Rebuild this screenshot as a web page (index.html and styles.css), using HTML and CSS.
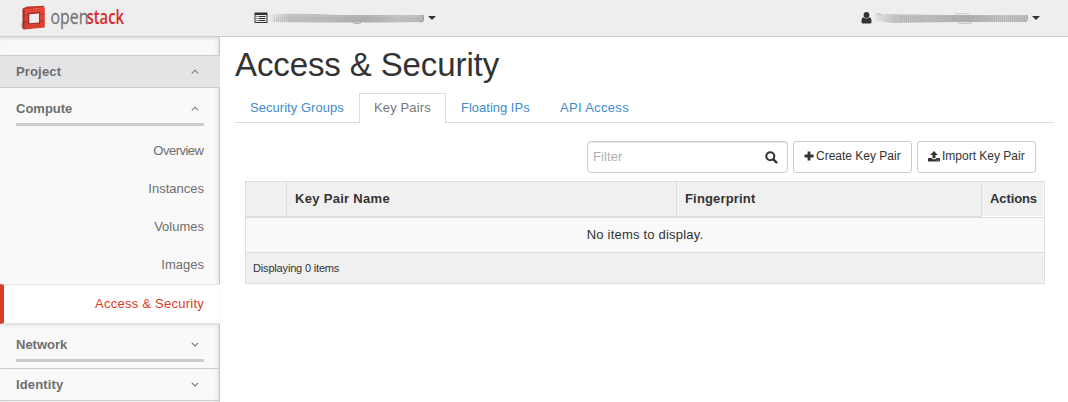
FILE: index.html
```html
<!DOCTYPE html>
<html lang="en">
<head>
<meta charset="utf-8">
<title>Access &amp; Security - OpenStack Dashboard</title>
<link rel="stylesheet" href="styles.css">
</head>
<body>
<header class="topbar">
  <svg class="logo" width="112" height="32" viewBox="0 0 112 32">
    <defs>
      <linearGradient id="face" x1="0" y1="0" x2="0" y2="1"><stop offset="0" stop-color="#e6473c"/><stop offset="1" stop-color="#d8402f"/></linearGradient>
      <linearGradient id="shade" x1="0" y1="0" x2="1" y2="0"><stop offset="0" stop-color="#aaa" stop-opacity="0"/><stop offset="1" stop-color="#777" stop-opacity=".8"/></linearGradient>
    </defs>
    <path d="M0 22.500l5-2v8z" fill="url(#shade)"/>
    <path d="M3.500 6.500L8 4.500l16.500-.8 1.300 1.800L5.500 8z" fill="#c5392f"/>
    <path d="M3.500 6.500l2.500 1v20l-2.500-1.500z" fill="#a62a24"/>
    <path fill="url(#face)" d="M5.500 7.500L25.800 5.500V25.500L5.500 27.500z"/>
    <path d="M8.800 10.800l12.200-.8v11.500l-12.200.8z" fill="#a32f29"/>
    <path d="M10.300 12.300l9.700-.8v9l-9.700.8z" fill="#eee"/>
    <path d="M4 13.300h5M4 20.300h5M21 12.300h4.800M21 19h4.800" stroke="#a5342d" stroke-width=".8"/>
    <g transform="translate(31.5 21.5) scale(.775 1)"><text class="logo-open">open</text></g>
    <g transform="translate(67.5 21.5) scale(.725 1)"><text class="logo-stack">stack</text></g>
  </svg>
  <div class="menu project-menu">
    <svg width="14" height="12" viewBox="0 0 14 12"><path fill="#333" fill-rule="evenodd" d="M1 .5h12l.5.500V10.500l-.5.500H1l-.5-.5V1zM1.500 3V10h11V3z"/><path d="M2.500 4.500h1M4.500 4.500H11.500M2.500 6.500h1M4.500 6.500H11.500M2.500 8.500h1M4.500 8.500H11.500" stroke="#333"/></svg>
    <svg class="smear" width="156" height="14" viewBox="0 0 156 14">
      <defs>
        <linearGradient id="blurA"><stop offset="0" stop-color="#ccc" stop-opacity=".3"/><stop offset=".12" stop-color="#c4c4c4"/><stop offset=".4" stop-color="#bdbdbd"/><stop offset=".6" stop-color="#b0b0b0"/><stop offset=".85" stop-color="#c6c6c6"/><stop offset="1" stop-color="#bbb"/></linearGradient>
        <pattern id="lines" width="2" height="14" patternUnits="userSpaceOnUse"><path d="M.5 0v14" stroke="#999" stroke-opacity=".3"/></pattern>
        <filter id="soft" x="-5%" y="-20%" width="110%" height="140%"><feGaussianBlur stdDeviation=".7"/></filter>
      </defs>
      <path filter="url(#soft)" fill="url(#blurA)" d="M1 3Q35 2 70 4L154 4l-1 7Q90 12 2 11z"/>
      <path fill="url(#lines)" d="M3 6h150v5H4z"/>
      <path d="M83 11.800q4 1.400 8 0" fill="none" stroke="#777" stroke-opacity=".6"/>
      <path d="M153.500 4v6l-4 1" fill="none" stroke="#888" stroke-opacity=".6"/>
    </svg>
    <span class="caret"></span>
  </div>
  <div class="menu user-menu">
    <svg width="11" height="12" viewBox="0 0 11 12"><circle cx="5.500" cy="3" r="2.900" fill="#333"/><path fill="#333" d="M2.500 5.300q3 2.400 6 0 2.200.5 2 4.700 0 1.500-1.500 1.500H2Q.5 11.500.5 10 .3 5.800 2.500 5.300z"/></svg>
    <svg class="smear" width="156" height="14" viewBox="0 0 156 14">
      <path filter="url(#soft)" fill="url(#blurA)" d="M1 3q3-2 6 0L75 4 154 4l-1 7-74 0-59 1Q8 11 1 9z"/>
      <path fill="url(#lines)" d="M25 5h127v6H25z"/>
      <path d="M2 3q3-1 6 1M81 3q7-.8 14 0" fill="none" stroke="#777" stroke-opacity=".3"/>
      <path d="M84 12q7 1 14 0M153.500 4v6" fill="none" stroke="#777" stroke-opacity=".4"/>
    </svg>
    <span class="caret"></span>
  </div>
</header>
<div class="page">
  <nav class="sidebar">
    <div class="panel-head current">Project<svg class="chev" width="8" height="5" viewBox="0 0 8 5"><path d="M.8 4.300L4 1.200l3.200 3.100"/></svg></div>
    <div class="group compute"><div class="group-title"><span class="t-compute">Compute</span><svg class="chev" width="8" height="5" viewBox="0 0 8 5"><path d="M.8 4.300L4 1.200l3.200 3.100"/></svg></div></div>
    <ul class="links">
      <li class="t-overview">Overview</li>
      <li>Instances</li>
      <li>Volumes</li>
      <li>Images</li>
      <li class="active">Access &amp; Security</li>
    </ul>
    <div class="group network"><div class="group-title">Network<svg class="chev" width="8" height="5" viewBox="0 0 8 5"><path d="M.8.800L4 3.900 7.200.800"/></svg></div></div>
    <div class="panel-head identity"><span>Identity</span><svg class="chev" width="8" height="5" viewBox="0 0 8 5"><path d="M.8.800L4 3.900 7.200.800"/></svg></div>
  </nav>
  <main class="content">
    <h1>Access &amp; Security</h1>
    <ul class="tabs">
      <li class="tab-groups"><span>Security Groups</span></li>
      <li class="tab-keys selected"><span>Key Pairs</span></li>
      <li class="tab-ips"><span>Floating IPs</span></li>
      <li class="tab-api"><span>API Access</span></li>
    </ul>
    <div class="actions">
      <div class="filter"><span>Filter</span>
        <svg width="13" height="13" viewBox="0 0 13 13"><circle cx="5.300" cy="5.300" r="4" fill="none" stroke="#333" stroke-width="2"/><path d="M8.400 8.400l3 3" stroke="#333" stroke-width="2.300" stroke-linecap="round"/></svg>
      </div>
      <div class="btn create"><svg width="10" height="10" viewBox="0 0 10 10"><path d="M5 .5v9M.5 5h9" stroke="#333" stroke-width="2.800"/></svg><span>Create Key Pair</span></div>
      <div class="btn import"><svg width="12" height="11" viewBox="0 0 12 11"><path fill="#333" d="M6 0l3.800 4H7.500v3.200h-3V4H2.200zM.5 7h3.200q.3 1.200 1.300 1.200h2Q8 8.200 8.300 7h3.200l.5.500v2.500l-.6.600H.6L0 10V7.500z"/><path d="M8.500 9.200h.8M10.200 9.200h.8" stroke="#fff" stroke-width=".7"/></svg><span>Import Key Pair</span></div>
    </div>
    <div class="table">
      <div class="thead"><div></div><div class="t-name">Key Pair Name</div><div class="t-finger">Fingerprint</div><div class="t-actions"><span>Actions</span></div></div>
      <div class="empty"><span>No items to display.</span></div>
      <div class="tfoot"><span>Displaying 0 items</span></div>
    </div>
  </main>
</div>
</body>
</html>
```
FILE: styles.css
```css
* { box-sizing: border-box; }
body { margin: 0; height: 402px; overflow: hidden; background: #fff; color: #333; font: 13px/18px "Liberation Sans", Arial, sans-serif; }
ul { list-style: none; margin: 0; padding: 0; }
svg { display: block; flex: none; }
.topbar { height: 37px; background: #eee; border-bottom: 1px solid #ccc; display: flex; align-items: flex-start; padding-left: 20px; }
.logo { margin-top: 2px; margin-left: -1px; }
.logo text { font-family: "Open Sans", sans-serif; font-size: 20.5px; }
.logo-open { fill: #777; stroke: #777; stroke-width: .3px; }
.logo-stack { fill: #d92b2b; font-weight: 600; }
.menu { display: flex; align-items: center; height: 14px; margin-top: 11px; }
.project-menu { margin-left: 123px; }
.user-menu { margin-left: 425px; }
.smear { margin-left: 2px; }
.caret { border: 4px solid transparent; border-top-color: #333; border-bottom: 0; margin-left: 2px; }
.page { display: flex; height: 365px; }
.sidebar { width: 220px; flex: none; background: #f9f9f9; padding-top: 18px; color: #6e6e6e; box-shadow: inset -1px 0 #c4c4c4, inset -4px 0 5px -2px #ddd, inset 0 3px 4px -3px #bbb; }
.panel-head { height: 33px; display: flex; align-items: center; justify-content: space-between; padding: 0 21px 0 16px; border: solid #ccc; border-width: 1px 0; font-weight: bold; letter-spacing: .15px; }
.current { background: #e2e4e6; }
.chev { fill: none; stroke: #777; stroke-width: 1.100; }
.group { padding: 0 16px; font-weight: bold; }
.compute { padding-top: 12px; height: 44px; }
.group-title { display: flex; align-items: center; justify-content: space-between; border-bottom: 3px solid #ccc; height: 26px; padding: 0 5px 6px 0; }
.links { text-align: right; }
.links li { height: 38px; line-height: 38px; padding-right: 16px; }
.links .t-overview { letter-spacing: -.5px; padding-right: 16.5px; }
.links .active { height: 40px; line-height: 38px; background: #fff; color: #d93c27; border: 1px solid #e3e3e3; border-left: 4px solid #dc3b25; border-right: 0; letter-spacing: .25px; box-shadow: 0 2px 4px -2px #ccc; }
.network { padding-top: 12px; height: 44px; }
.content { flex: 1; min-width: 0; padding: 6px 14px 0 15px; }
h1 { margin: 0; height: 50px; font-size: 33px; line-height: 44px; font-weight: normal; letter-spacing: -.11px; }
.tabs { display: flex; height: 30px; border-bottom: 1px solid #ddd; color: #428bca; }
.tabs li { height: 30px; padding: 5px 14px 0; border: 1px solid transparent; border-bottom: 0; white-space: nowrap; }
.tab-groups { width: 124px; letter-spacing: .04px; }
.tab-keys { width: 87px; letter-spacing: .13px; }
.tab-ips { width: 99px; }
.tab-api { letter-spacing: .32px; }
.tabs .selected { border-color: #ddd; background: #fff; color: #777; }
.actions { display: flex; justify-content: flex-end; gap: 5px; padding: 18px 18px 8px 0; height: 58px; }
.filter { width: 201px; height: 32px; border: 1px solid #ccc; border-radius: 4px; box-shadow: inset 0 1px 1px #e8e8e8; display: flex; align-items: center; justify-content: space-between; padding: 0 9px 0 5px; color: #b0b0b0; letter-spacing: .1px; }
.btn { width: 119px; height: 32px; border: 1px solid #ccc; border-radius: 3px; font-size: 12px; display: flex; align-items: center; padding: 0 0 2px 10px; gap: 2px; white-space: nowrap; }
.table { margin: 0 9px 0 10px; border: 1px solid #ddd; }
.thead { display: grid; grid-template-columns: 40px 390px 305px 1fr; height: 36px; background: #f0f0f0; border-bottom: 2px solid #ddd; font-weight: bold; line-height: 34px; }
.thead > div { padding-left: 8px; border-left: 1px solid #ddd; }
.thead > div:first-child { border: 0; }
.thead .t-name { letter-spacing: .3px; }
.thead .t-finger { letter-spacing: .17px; }
.thead .t-actions { letter-spacing: -.1px; border-right: 1px solid #fff; border-bottom: 1px solid #fff; }
.empty { height: 34px; line-height: 34px; text-align: center; background: #f9f9f9; letter-spacing: .2px; }
.tfoot { height: 31px; line-height: 30px; padding-left: 7px; background: #f0f0f0; border-top: 1px solid #ddd; border-bottom-right-radius: 3px; font-size: 11px; letter-spacing: -.17px; }
```
